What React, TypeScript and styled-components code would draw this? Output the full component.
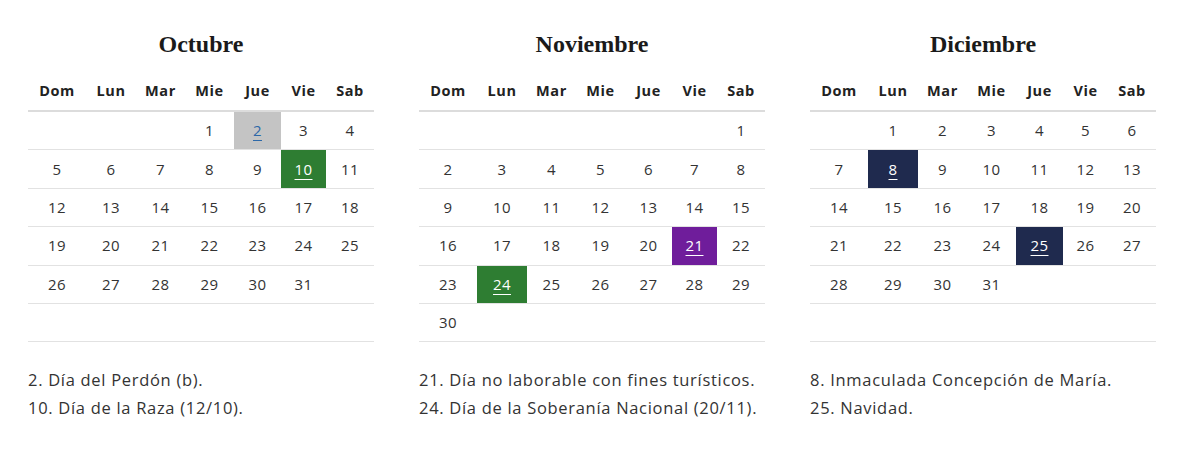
import * as React from 'react';
import styled, { createGlobalStyle } from 'styled-components';

const GlobalStyle = createGlobalStyle`
  body {
    margin: 0;
    background: #fff;
    font-family: 'Open Sans', 'DejaVu Sans', sans-serif;
  }
`;

const Page = styled.div`
  display: flex;
  gap: 45px;
  padding: 29px 0 0 28px;
`;

const Month = styled.section`
  width: 346px;
`;

const Title = styled.h2`
  margin: 0 0 13px;
  height: 30px;
  line-height: 30px;
  text-align: center;
  font-family: 'Liberation Serif', serif;
  font-weight: 700;
  font-size: 24px;
  color: #1a1a1a;
`;

const Grid = styled.div`
  display: grid;
  grid-template-columns: 58px 50px 49px 49px 47px 45px 48px;
`;

const HeadCell = styled.div`
  height: 38px;
  line-height: 38px;
  text-align: center;
  font-weight: 700;
  font-size: 14.5px;
  letter-spacing: 0.6px;
  color: #222;
  border-bottom: 2px solid #dcdcdc;
`;

type Tone = 'grey' | 'green' | 'purple' | 'navy';

const tones: Record<Tone, { bg: string; fg: string }> = {
  grey: { bg: '#c4c4c4', fg: '#2d68a8' },
  green: { bg: '#2e7d32', fg: '#ffffff' },
  purple: { bg: '#6f1d9b', fg: '#ffffff' },
  navy: { bg: '#1f2a4e', fg: '#ffffff' },
};

const DayCell = styled.div<{ $tone?: Tone }>`
  box-sizing: border-box;
  height: 38.4px;
  display: flex;
  align-items: center;
  justify-content: center;
  font-size: 15px;
  letter-spacing: 0.4px;
  color: ${p => (p.$tone ? tones[p.$tone].fg : '#333')};
  background: ${p => (p.$tone ? tones[p.$tone].bg : 'transparent')};
  border-bottom: 1px solid #e2e2e2;
  padding-bottom: 1px;
`;

const Mark = styled.span`
  text-decoration: underline;
  text-underline-offset: 4px;
  text-decoration-thickness: 1px;
`;

const Notes = styled.div`
  margin-top: 24px;
  font-size: 16.5px;
  letter-spacing: 0.7px;
  line-height: 28px;
  color: #333;
`;

interface IMonth {
  name: string;
  offset: number;
  days: number;
  marks: { [day: number]: Tone };
  notes: string[];
}

const months: IMonth[] = [
  {
    name: 'Octubre',
    offset: 3,
    days: 31,
    marks: { 2: 'grey', 10: 'green' },
    notes: ['2. Día del Perdón (b).', '10. Día de la Raza (12/10).'],
  },
  {
    name: 'Noviembre',
    offset: 6,
    days: 30,
    marks: { 21: 'purple', 24: 'green' },
    notes: ['21. Día no laborable con fines turísticos.', '24. Día de la Soberanía Nacional (20/11).'],
  },
  {
    name: 'Diciembre',
    offset: 1,
    days: 31,
    marks: { 8: 'navy', 25: 'navy' },
    notes: ['8. Inmaculada Concepción de María.', '25. Navidad.'],
  },
];

const weekDays = ['Dom', 'Lun', 'Mar', 'Mie', 'Jue', 'Vie', 'Sab'];

const MonthView = ({ month }: { month: IMonth }) => {
  const cells: (number | null)[] = [];
  for (let i = 0; i < month.offset; i++) cells.push(null);
  for (let d = 1; d <= month.days; d++) cells.push(d);
  while (cells.length < 42) cells.push(null);

  return (
    <Month>
      <Title>{month.name}</Title>
      <Grid>
        {weekDays.map(w => <HeadCell key={w}>{w}</HeadCell>)}
        {cells.map((d, i) => {
          const tone = d ? month.marks[d] : undefined;
          return (
            <DayCell key={i} $tone={tone}>
              {d && (tone ? <Mark>{d}</Mark> : d)}
            </DayCell>
          );
        })}
      </Grid>
      <Notes>
        {month.notes.map(n => <div key={n}>{n}</div>)}
      </Notes>
    </Month>
  );
};

export default function App() {
  return (
    <Page>
      <GlobalStyle />
      {months.map(m => <MonthView key={m.name} month={m} />)}
    </Page>
  );
}
